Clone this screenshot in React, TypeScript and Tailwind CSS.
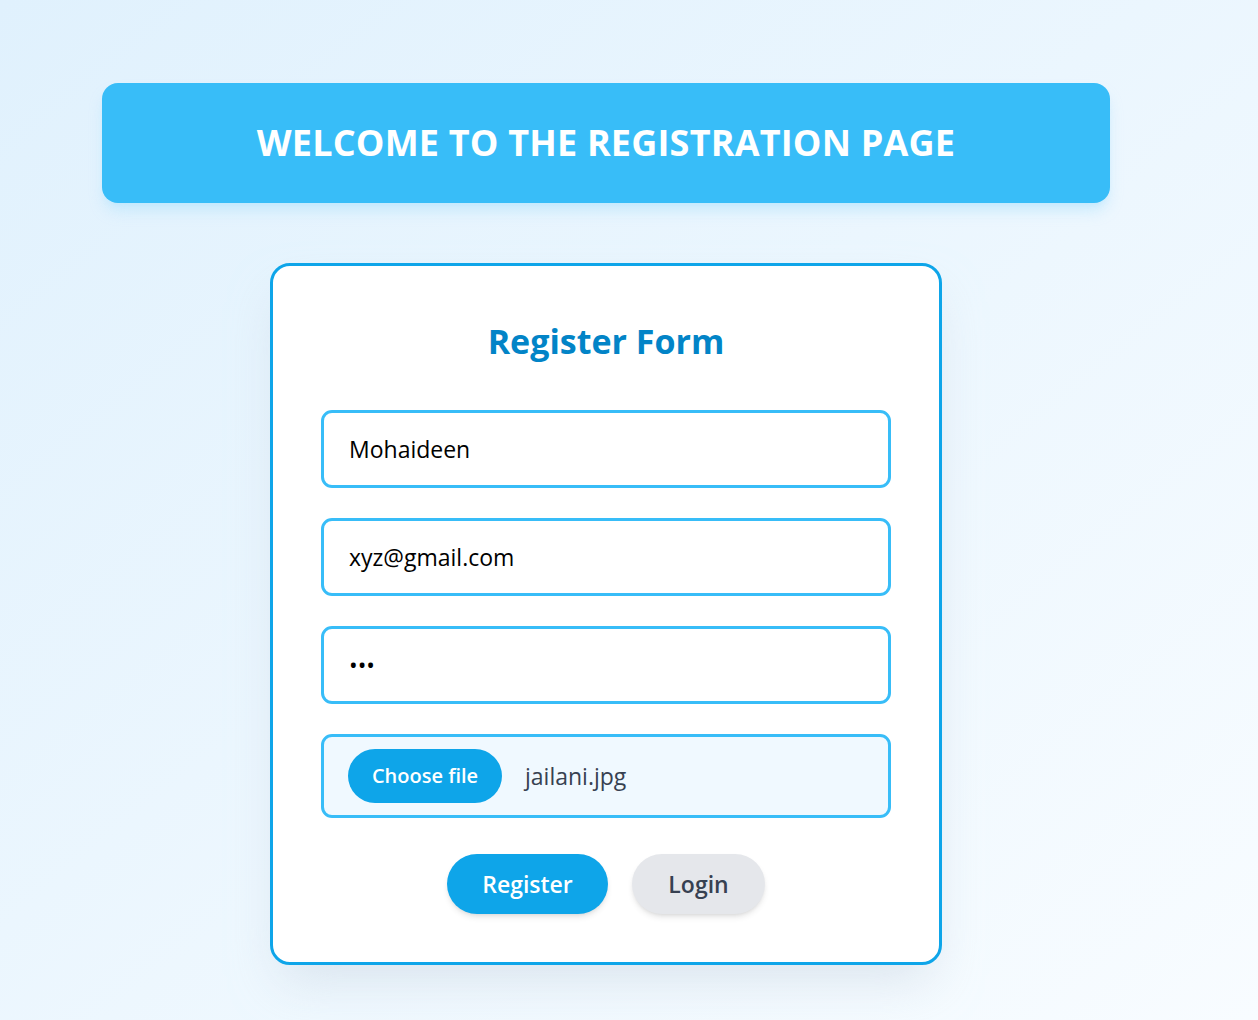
import { useState } from "react";

// ── Text field ────────────────────────────────────────────────────────────────

interface FieldProps {
  type: string;
  value: string;
  onChange: (v: string) => void;
}

function Field({ type, value, onChange }: FieldProps) {
  return (
    <input
      type={type}
      value={value}
      onChange={(e) => onChange(e.target.value)}
      className="w-full h-[78px] px-[25px] rounded-[11px] border-[3px] border-[#38bdf8] bg-white text-[23px] text-black outline-none"
    />
  );
}

// ── Page ─────────────────────────────────────────────────────────────────────

export default function App() {
  const [name, setName] = useState("Mohaideen");
  const [email, setEmail] = useState("xyz@gmail.com");
  const [password, setPassword] = useState("abc");

  return (
    <div className="min-h-screen bg-gradient-to-br from-[#e0f1fd] to-[#f8fcff] font-['Open_Sans',sans-serif]">
      <div className="w-[1212px] pt-[83px] pb-[55px] flex flex-col items-center">
        {/* Banner */}
        <header className="w-[1008px] h-[120px] rounded-2xl bg-[#38bdf8] shadow-lg shadow-sky-200/70 flex items-center justify-center">
          <h1 className="text-white text-[36px] font-bold tracking-[0.2px]">
            WELCOME TO THE REGISTRATION PAGE
          </h1>
        </header>

        {/* Card */}
        <form
          onSubmit={(e) => e.preventDefault()}
          className="mt-[60px] w-[672px] rounded-[20px] border-[3px] border-[#0ea5e9] bg-white px-[48px] pt-[47px] pb-[48px] shadow-2xl shadow-slate-300/60"
        >
          <h2 className="text-center text-[#0284c7] text-[34px] font-bold leading-[56px]">
            Register Form
          </h2>

          <div className="mt-[41px] flex flex-col gap-[30px]">
            <Field type="text" value={name} onChange={setName} />
            <Field type="email" value={email} onChange={setEmail} />
            <Field type="password" value={password} onChange={setPassword} />

            {/* File picker */}
            <div className="h-[84px] px-[24px] rounded-[11px] border-[3px] border-[#38bdf8] bg-[#f0f9ff] flex items-center gap-[23px]">
              <button
                type="button"
                className="h-[54px] w-[154px] rounded-full bg-[#0ea5e9] text-white text-[20px] font-semibold"
              >
                Choose file
              </button>
              <span className="text-[23px] text-[#374151]">jailani.jpg</span>
            </div>
          </div>

          {/* Actions */}
          <div className="mt-[36px] flex justify-center gap-[24px]">
            <button
              type="submit"
              className="h-[60px] w-[161px] rounded-full bg-[#0ea5e9] text-white text-[23px] font-semibold shadow-md"
            >
              Register
            </button>
            <button
              type="button"
              className="h-[60px] w-[133px] rounded-full bg-[#e5e7eb] text-[#374151] text-[23px] font-semibold shadow-md"
            >
              Login
            </button>
          </div>
        </form>
      </div>
    </div>
  );
}
